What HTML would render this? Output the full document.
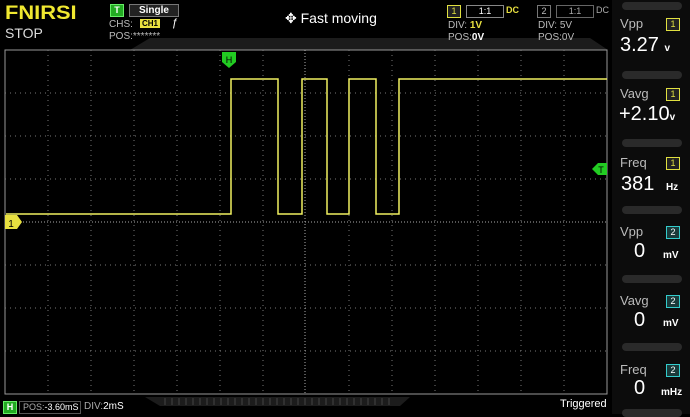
<!DOCTYPE html>
<html><head><meta charset="utf-8"><style>
body{margin:0;width:690px;height:414px;background:#000;overflow:hidden;position:relative;font-family:"Liberation Sans",sans-serif;color:#ddd}
.a{position:absolute;white-space:nowrap}
.lab{font-size:13px;color:#bbb}
.val{font-size:20px;color:#fff}
.u{font-size:10px;color:#fff;font-weight:bold}
.b1{border:1px solid #e0e040;color:#e0e040;font-size:9px;width:12px;height:11px;text-align:center;line-height:11px;background:#222}
.b2{border:1px solid #3cc;color:#fff;font-size:9px;width:12px;height:11px;text-align:center;line-height:11px;background:#1a3a3a}
.sm{font-size:10px;color:#bbb}
.sep{position:absolute;left:622px;width:60px;height:8px;border-radius:4px;background:#2a2a2a}
</style></head><body>
<svg class="a" style="left:0;top:0" width="690" height="414">
<path d="M130 50 L150 38 L260 38 L280 50Z M195 50 L215 38 L590 38 L608 50Z" fill="#1c1c1c"/>
<path d="M145 397 L160 406 L400 406 L410 397Z" fill="#1c1c1c"/>
<g stroke="#444" stroke-width="1"><path d="M165 398V405M172 398V405M179 398V405M186 398V405M193 398V405M200 398V405M207 398V405M214 398V405M221 398V405M228 398V405M235 398V405M242 398V405M249 398V405M256 398V405M263 398V405M270 398V405M277 398V405M284 398V405M291 398V405M298 398V405M305 398V405M312 398V405M319 398V405M326 398V405M333 398V405M340 398V405M347 398V405M354 398V405M361 398V405M368 398V405M375 398V405M382 398V405M389 398V405"/></g>
<rect x="612" y="0" width="78" height="414" fill="#0c0c0c"/>
<rect x="5" y="50" width="602" height="344" fill="none" stroke="#999" stroke-width="1"/>
<g stroke="#777" stroke-width="1" stroke-dasharray="1 4">
<path d="M48 50V394M91 50V394M134 50V394M177 50V394M220 50V394M263 50V394M349 50V394M392 50V394M435 50V394M478 50V394M521 50V394M564 50V394"/>
<path d="M5 93H607M5 136H607M5 179H607M5 265H607M5 308H607M5 351H607"/>
</g>
<g stroke="#aaa" stroke-width="1" stroke-dasharray="1 2"><path d="M305 50V394M5 222H607"/></g>
<path d="M6 214H231V79H278V214H302V79H327V214H349V79H376V214H399V79H607" fill="none" stroke="#f0f060" stroke-width="1.5"/>
<path d="M222 52h14v10l-7 6l-7-6z" fill="#2c2"/>
<text x="229" y="63" font-size="9" fill="#000" text-anchor="middle" font-family="Liberation Sans">H</text>
<path d="M5 215h12l5 7l-5 7h-12z" fill="#e8e040"/>
<text x="11" y="227" font-size="10" fill="#000" text-anchor="middle">1</text>
<path d="M607 163h-9l-6 6l6 6h9z" fill="#2c2"/>
<text x="601" y="173" font-size="9" fill="#000" text-anchor="middle">T</text>
</svg>
<div class="a" style="left:5px;top:3px;font-size:19px;font-weight:bold;color:#f0e830;transform:scaleX(1.15);transform-origin:left">FNIRSI</div>
<div class="a" style="left:5px;top:25px;font-size:14px;color:#ddd">STOP</div>
<div class="a" style="left:110px;top:4px;width:12px;height:11px;background:#2a2;border:1px solid #6e6;font-size:9px;color:#fff;text-align:center;line-height:11px;font-weight:bold">T</div>
<div class="a" style="left:129px;top:4px;width:48px;height:11px;border:1px solid #777;background:#222;font-size:10px;color:#fff;text-align:center;line-height:11px;font-weight:bold">Single</div>
<div class="a sm" style="left:109px;top:19px">CHS:</div>
<div class="a" style="left:140px;top:19px;background:#e8e040;color:#000;font-size:8px;padding:0 2px;font-weight:bold">CH1</div>
<div class="a" style="left:172px;top:17px;font-size:11px;color:#fff">ƒ</div>
<div class="a sm" style="left:109px;top:31px">POS:*******</div>
<div class="a" style="left:285px;top:10px;font-size:14px;color:#fff">✥ Fast moving</div>
<div class="a b1" style="left:447px;top:5px">1</div>
<div class="a" style="left:466px;top:5px;width:36px;height:11px;border:1px solid #888;font-size:9px;color:#fff;text-align:center;line-height:11px">1:1</div>
<div class="a" style="left:506px;top:5px;font-size:9px;color:#e8e040;font-weight:bold">DC</div>
<div class="a sm" style="left:448px;top:20px">DIV: <b style="color:#e8e040">1V</b></div>
<div class="a sm" style="left:448px;top:32px">POS:<b style="color:#fff">0V</b></div>
<div class="a" style="left:537px;top:5px;width:12px;height:11px;border:1px solid #777;font-size:9px;color:#bbb;text-align:center;line-height:11px">2</div>
<div class="a" style="left:556px;top:5px;width:36px;height:11px;border:1px solid #666;font-size:9px;color:#aaa;text-align:center;line-height:11px">1:1</div>
<div class="a" style="left:596px;top:5px;font-size:9px;color:#aaa">DC</div>
<div class="a sm" style="left:538px;top:20px">DIV:  5V</div>
<div class="a sm" style="left:538px;top:32px">POS:0V</div>
<div class="sep" style="top:2px"></div><div class="sep" style="top:71px"></div><div class="sep" style="top:139px"></div><div class="sep" style="top:206px"></div><div class="sep" style="top:275px"></div><div class="sep" style="top:343px"></div><div class="sep" style="top:409px"></div>
<div class="a lab" style="left:620px;top:16px">Vpp</div><div class="a b1" style="left:666px;top:18px">1</div>
<div class="a val" style="left:620px;top:34px">3.27 <span class="u">v</span></div>
<div class="a lab" style="left:620px;top:86px">Vavg</div><div class="a b1" style="left:666px;top:88px">1</div>
<div class="a val" style="left:619px;top:103px">+2.10<span class="u">v</span></div>
<div class="a lab" style="left:620px;top:155px">Freq</div><div class="a b1" style="left:666px;top:157px">1</div>
<div class="a val" style="left:621px;top:173px">381 <span class="u" style="margin-left:6px">Hz</span></div>
<div class="a lab" style="left:620px;top:224px">Vpp</div><div class="a b2" style="left:666px;top:226px">2</div>
<div class="a val" style="left:634px;top:240px">0</div><div class="a u" style="left:663px;top:250px">mV</div>
<div class="a lab" style="left:620px;top:293px">Vavg</div><div class="a b2" style="left:666px;top:295px">2</div>
<div class="a val" style="left:634px;top:309px">0</div><div class="a u" style="left:663px;top:318px">mV</div>
<div class="a lab" style="left:620px;top:362px">Freq</div><div class="a b2" style="left:666px;top:364px">2</div>
<div class="a val" style="left:634px;top:377px">0</div><div class="a u" style="left:661px;top:387px">mHz</div>
<div class="a" style="left:3px;top:401px;width:12px;height:11px;background:#2a2;border:1px solid #6e6;font-size:9px;color:#fff;text-align:center;line-height:11px;font-weight:bold">H</div>
<div class="a" style="left:19px;top:401px;width:57px;height:11px;border:1px solid #555;font-size:9px;color:#fff;line-height:11px;padding-left:3px"><span style="color:#aaa">POS:</span>-3.60mS</div>
<div class="a" style="left:84px;top:401px;font-size:10px;color:#fff"><span style="color:#aaa">DIV:</span>2mS</div>
<div class="a" style="left:560px;top:398px;font-size:11px;color:#fff">Triggered</div>
</body></html>
